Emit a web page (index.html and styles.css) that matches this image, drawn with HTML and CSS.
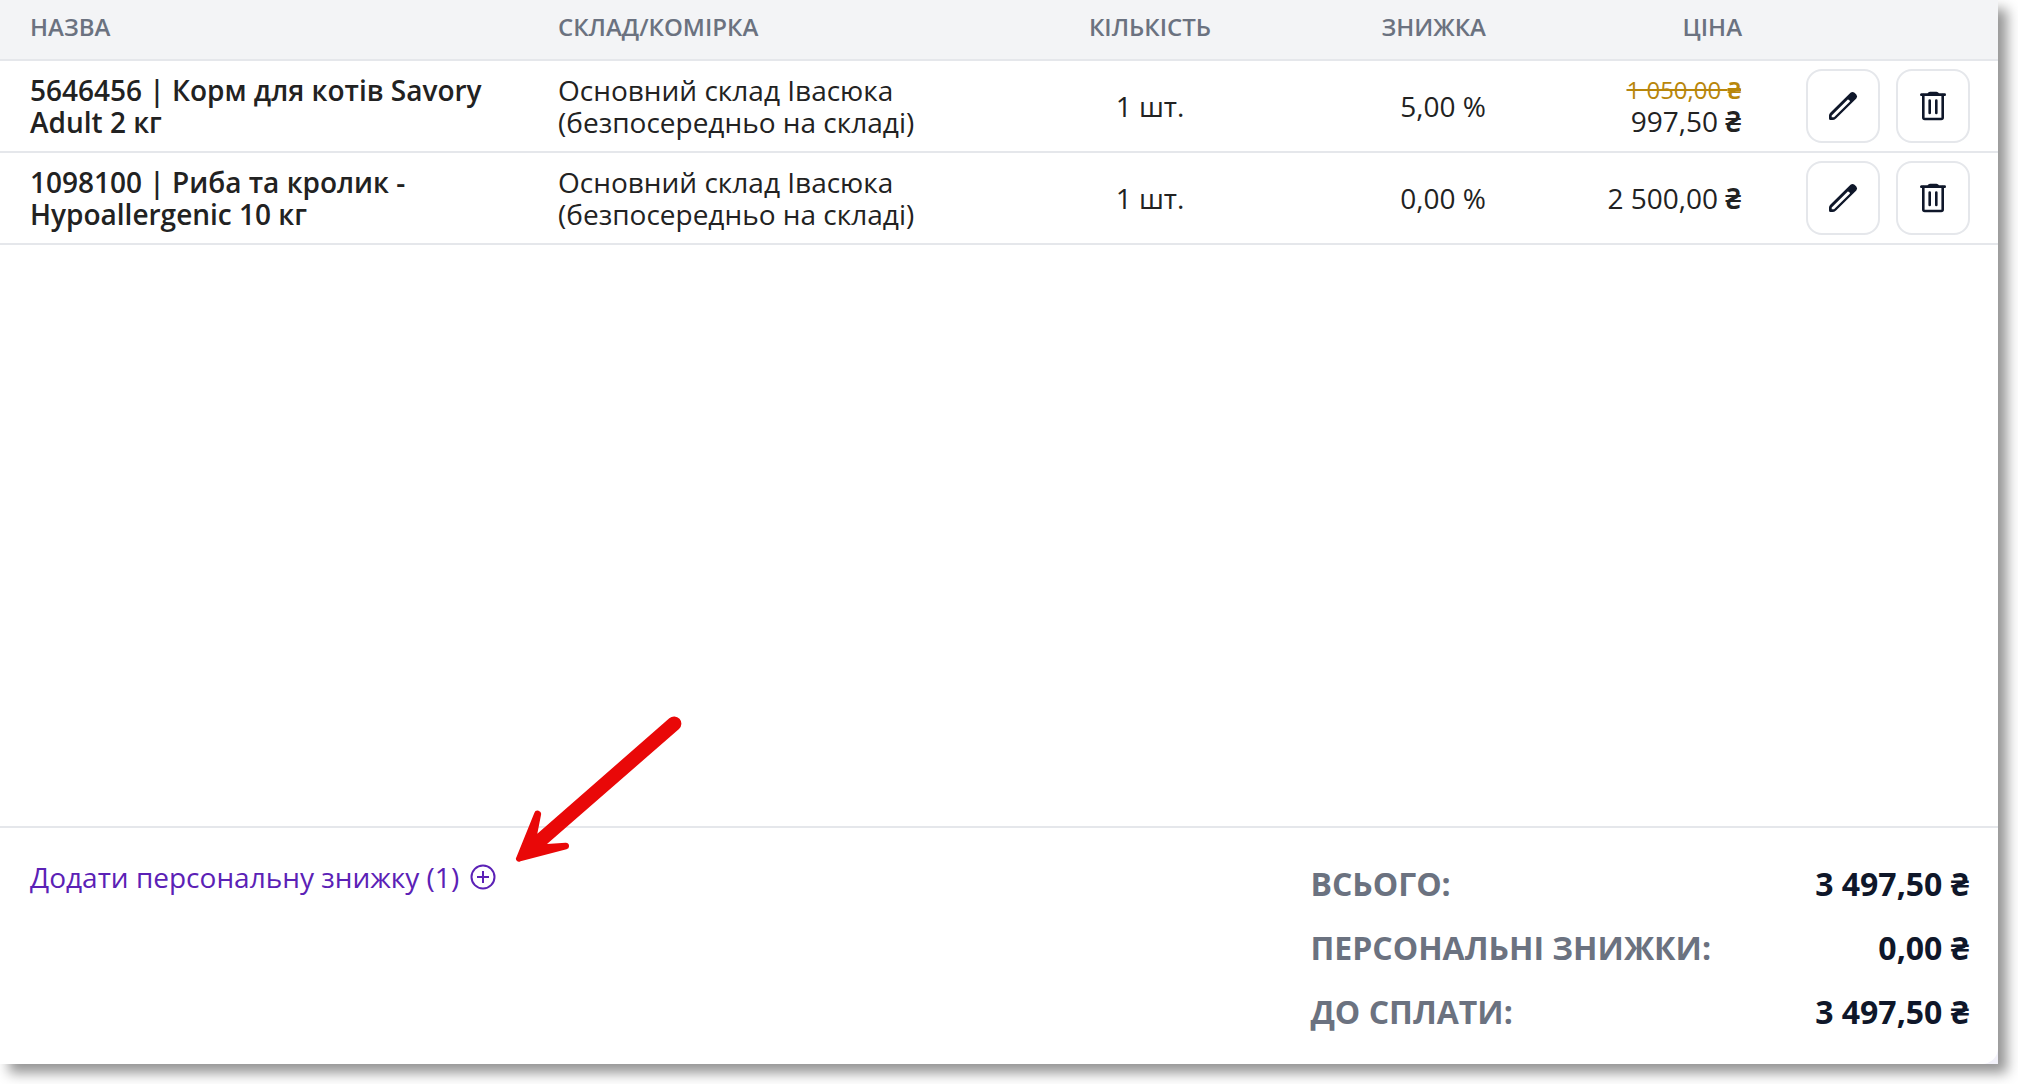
FILE: index.html
```html
<!DOCTYPE html>
<html lang="uk">
<head>
<meta charset="utf-8">
<title>Товари замовлення</title>
<link rel="stylesheet" href="styles.css">
</head>
<body>
<svg class="sprite" aria-hidden="true">
  <symbol id="icon-edit" viewBox="0 0 36 36">
    <path fill="currentColor" fill-rule="evenodd" d="M4 27.500Q4 26 5.500 24.500L25.500 4.800Q27.500 3 29.500 4.800L31.300 6.600Q33 8.500 31.300 10.500L11 30.500Q9.300 32 7.500 32H5.500Q4 32 4 30.500ZM6.700 29.300V27.600L22.800 11.500Q24.700 11.600 25 13.500L9 29.300Z"/>
  </symbol>
  <symbol id="icon-trash" viewBox="0 0 36 36">
    <path d="M8.300 7V29.500Q8.300 31 9.800 31H26.200Q27.700 31 27.700 29.500V7M14.700 12.500V25M21.300 12.500V25" fill="none" stroke="currentColor" stroke-width="2.600" stroke-linecap="round"/>
    <path d="M6.300 5.300H12.500Q13.500 3.700 15 3.700H21.500Q23 3.700 24 5.300H29.700Q31 5.300 31 6.700T29.700 8H6.300Q5 8 5 6.700T6.300 5.300Z" fill="currentColor"/>
  </symbol>
</svg>
<div class="frame">
  <main class="order">
    <table class="items">
      <colgroup>
        <col><col class="col-store"><col class="col-qty"><col class="col-discount"><col class="col-price"><col class="col-actions">
      </colgroup>
      <thead>
        <tr>
          <th scope="col">НАЗВА</th>
          <th scope="col">СКЛАД/КОМІРКА</th>
          <th scope="col" class="center">КІЛЬКІСТЬ</th>
          <th scope="col" class="right">ЗНИЖКА</th>
          <th scope="col" class="right">ЦІНА</th>
          <td></td>
        </tr>
      </thead>
      <tbody>
        <tr>
          <td class="name">5646456 | Корм для котів Savory Adult 2 кг</td>
          <td>Основний склад Івасюка (безпосередньо на складі)</td>
          <td class="center">1 шт.</td>
          <td class="right">5,00 %</td>
          <td class="right"><s class="old-price">1 050,00 <span class="currency">₴</span></s>997,50 <span class="currency">₴</span></td>
          <td class="actions-cell">
            <div class="actions">
              <button type="button" class="icon-button" aria-label="Редагувати"><svg class="icon"><use href="#icon-edit"/></svg></button>
              <button type="button" class="icon-button" aria-label="Видалити"><svg class="icon"><use href="#icon-trash"/></svg></button>
            </div>
          </td>
        </tr>
        <tr>
          <td class="name">1098100 | Риба та кролик - Hypoallergenic 10 кг</td>
          <td>Основний склад Івасюка (безпосередньо на складі)</td>
          <td class="center">1 шт.</td>
          <td class="right">0,00 %</td>
          <td class="right">2 500,00 <span class="currency">₴</span></td>
          <td class="actions-cell">
            <div class="actions">
              <button type="button" class="icon-button" aria-label="Редагувати"><svg class="icon"><use href="#icon-edit"/></svg></button>
              <button type="button" class="icon-button" aria-label="Видалити"><svg class="icon"><use href="#icon-trash"/></svg></button>
            </div>
          </td>
        </tr>
      </tbody>
    </table>
    <footer class="summary">
      <button type="button" class="add-discount">
        <span>Додати персональну знижку (1)</span>
        <svg class="plus" viewBox="0 0 28 28" aria-hidden="true"><path d="M14 8V20M8 14H20" stroke="currentColor" stroke-width="2" fill="none"/><circle cx="14" cy="14" r="11.500" stroke="currentColor" stroke-width="2" fill="none"/></svg>
        <svg class="pointer" viewBox="0 0 190 160" aria-hidden="true"><path fill="#e90808" d="M164.300 8.300A7.100 7.100 0 0 1 174 19L42 134L60.500 132.800A3.300 3.300 0 0 1 61.500 139.300L15.500 151.300A3 3 0 0 1 11.500 147L29.300 103A3.500 3.500 0 0 1 36 105L32.300 123.700Z"/></svg>
      </button>
      <dl class="totals">
        <div class="total"><dt>ВСЬОГО:</dt><dd>3 497,50 <span class="currency">₴</span></dd></div>
        <div class="total"><dt>ПЕРСОНАЛЬНІ ЗНИЖКИ:</dt><dd>0,00 <span class="currency">₴</span></dd></div>
        <div class="total"><dt>ДО СПЛАТИ:</dt><dd>3 497,50 <span class="currency">₴</span></dd></div>
      </dl>
    </footer>
  </main>
</div>
</body>
</html>
```

FILE: styles.css
```css
* { box-sizing: border-box; }

body {
  margin: 0;
  min-height: 100vh;
  display: flex;
  padding: 0 20px 20px 0;
  background: #fff;
  color: #222;
  font: 28px/32px "Open Sans", "Noto Sans", sans-serif;
}

.sprite { position: absolute; width: 0; height: 0; }

.frame {
  flex: 1;
  display: flex;
  background: #f3f2fa;
  box-shadow: 9px 9px 12px rgba(0, 0, 0, .42);
}

.order {
  flex: 1;
  display: flex;
  flex-direction: column;
  justify-content: space-between;
  background: #fff;
  border-bottom-right-radius: 16px;
}

.items {
  width: 100%;
  table-layout: fixed;
  border-spacing: 0;
}

.col-store { width: 512px; }
.col-qty { width: 216px; }
.col-discount, .col-price { width: 256px; }
.col-actions { width: 228px; }

.items th, .items td {
  padding: 0 28px;
  border-bottom: 2px solid #e5e7eb;
  text-align: left;
}

.items thead th, .items thead td {
  padding-top: 11px;
  padding-bottom: 16px;
  background: #f3f4f6;
  color: #6b7280;
  font-size: 24px;
  font-weight: 600;
}

.items th:first-child, .items td:first-child { padding-left: 30px; }

.items .center { text-align: center; }
.items .right { text-align: right; }
.items .name { font-weight: 600; }

.items .actions-cell { padding: 8px 28px 8px 0; }

.actions {
  display: flex;
  justify-content: flex-end;
  gap: 16px;
}

.old-price {
  display: block;
  color: #b8860b;
  font-size: 24px;
  line-height: 30px;
}

.currency {
  padding-right: 1px;
  font-family: "Noto Sans", "Open Sans", sans-serif;
  font-weight: 600;
  line-height: 1;
}

.totals .currency { font-weight: 700; }

.icon-button {
  display: flex;
  align-items: center;
  justify-content: center;
  width: 74px;
  height: 74px;
  padding: 0;
  border: 2px solid #e5e7eb;
  border-radius: 16px;
  background: #fff;
  color: #0f172a;
}

.icon { width: 36px; height: 36px; }

.summary {
  display: flex;
  align-items: flex-start;
  justify-content: space-between;
  padding: 24px 28px 20px 30px;
  border-top: 2px solid #e5e7eb;
}

.add-discount {
  position: relative;
  display: flex;
  align-items: center;
  gap: 10px;
  padding: 9px 0;
  border: 0;
  background: none;
  color: #5b21b6;
  font: inherit;
}

.plus { width: 28px; height: 28px; }

/* Callout arrow that points at the discount link */
.pointer {
  position: absolute;
  left: calc(100% + 8px);
  bottom: 32px;
  width: 190px;
  height: 160px;
}

.totals {
  width: 34%;
  margin: 0;
  font-size: 32px;
  font-weight: 700;
  line-height: 64px;
}

.total { display: flex; justify-content: space-between; }
.total dt { color: #6b7280; }
.total dd { margin: 0; color: #0f172a; }
```
